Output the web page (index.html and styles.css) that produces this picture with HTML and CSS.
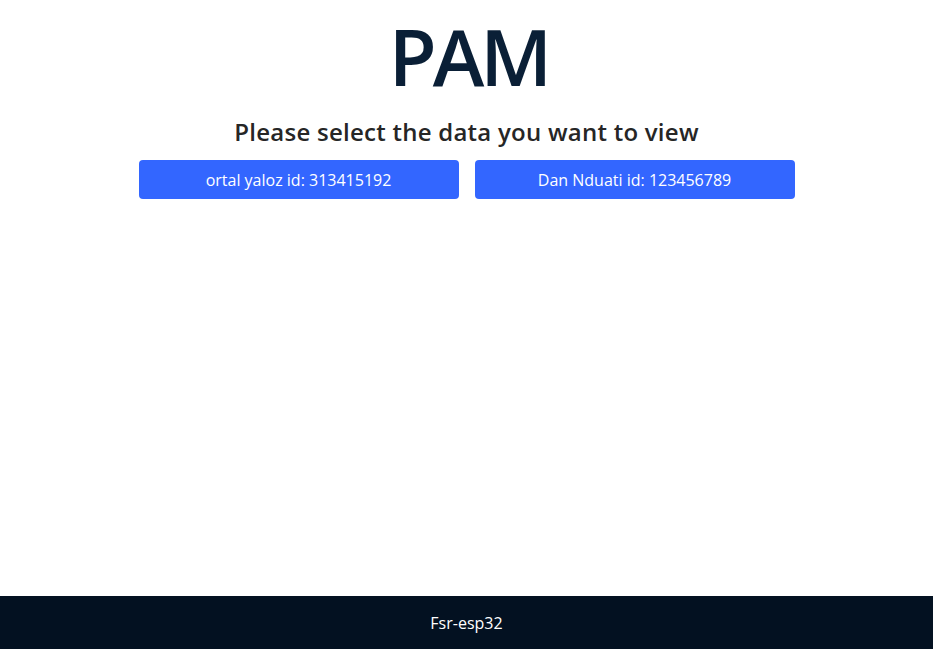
FILE: index.html
```html
<!DOCTYPE html>
<html lang="en">
<head>
<meta charset="utf-8">
<title>PAM</title>
<link rel="stylesheet" href="styles.css">
</head>
<body>
<div class="page">
  <main class="main">
    <h1 class="title">PAM</h1>
    <h2 class="subtitle">Please select the data you want to view</h2>
    <div class="choices">
      <button class="choice">ortal yaloz id: 313415192</button>
      <button class="choice">Dan Nduati id: 123456789</button>
    </div>
  </main>
  <footer class="footer">Fsr-esp32</footer>
</div>
</body>
</html>
```

FILE: styles.css
```css
html, body {
  margin: 0;
  padding: 0;
  background: #ffffff;
}
body {
  font-family: "Open Sans", "Noto Sans", sans-serif;
}
.page {
  display: flex;
  flex-direction: column;
  min-height: 649px;
}
.main {
  flex: 1;
  display: flex;
  flex-direction: column;
  align-items: center;
}
.title {
  margin: 8px 0 0;
  font-size: 78px;
  line-height: 96px;
  font-weight: 600;
  color: #0a1f36;
  letter-spacing: -4px;
  padding-left: 4px;
}
.subtitle {
  margin: 12px 0 0;
  font-size: 24px;
  line-height: 32px;
  font-weight: 600;
  color: #262626;
  letter-spacing: 0.25px;
}
.choices {
  display: flex;
  gap: 16px;
  margin-top: 12px;
}
.choice {
  width: 320px;
  height: 39px;
  border: none;
  border-radius: 4px;
  background: #3366ff;
  color: #ffffff;
  font-family: inherit;
  font-size: 16px;
  padding: 0;
}
.footer {
  height: 53px;
  background: #031121;
  color: #ffffff;
  display: flex;
  align-items: center;
  justify-content: center;
  font-size: 16px;
}
```
